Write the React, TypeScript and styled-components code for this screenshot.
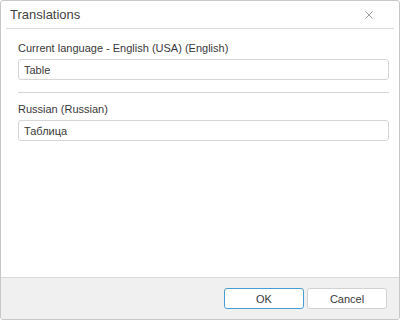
import React from 'react';
import styled, { createGlobalStyle } from 'styled-components';

const GlobalStyle = createGlobalStyle`
  html, body {
    margin: 0;
    padding: 0;
    background: #ffffff;
  }
  body {
    font-family: "Liberation Sans", Arial, sans-serif;
  }
`;

const Dialog = styled.div`
  width: 400px;
  height: 320px;
  box-sizing: border-box;
  border: 1px solid #c8c8c8;
  border-radius: 3px;
  background: #ffffff;
  display: flex;
  flex-direction: column;
  overflow: hidden;
`;

const Header = styled.div`
  margin: 0 5px;
  height: 27px;
  border-bottom: 1px solid #dcdcdc;
  display: flex;
  align-items: center;
  justify-content: space-between;
  padding: 0 0 0 4px;
`;

const Title = styled.span`
  font-size: 13px;
  color: #444444;
  line-height: 16px;
  padding-top: 1px;
`;

const CloseButton = styled.button`
  width: 16px;
  height: 16px;
  margin-right: 17px;
  padding: 0;
  border: none;
  background: transparent;
  display: flex;
  align-items: center;
  justify-content: center;
  cursor: pointer;
`;

const Body = styled.div`
  flex: 1;
  padding: 13px 10px 0 17px;
`;

const Label = styled.div`
  font-size: 11px;
  line-height: 13px;
  color: #3a3a3a;
`;

const Field = styled.input`
  display: block;
  width: 100%;
  height: 21px;
  box-sizing: border-box;
  margin: 4px 0 0;
  padding: 0 5px;
  border: 1px solid #d6d6d6;
  border-radius: 3px;
  font-family: "Liberation Sans", Arial, sans-serif;
  font-size: 11px;
  color: #3a3a3a;
  background: #ffffff;
  outline: none;
`;

const Divider = styled.div`
  height: 1px;
  background: #d4d4d4;
  margin: 12px 0 10px;
`;

const Footer = styled.div`
  height: 42px;
  box-sizing: border-box;
  flex-shrink: 0;
  border-top: 1px solid #dadada;
  background: #f0f0f0;
  display: flex;
  justify-content: flex-end;
  align-items: flex-start;
  gap: 3px;
  padding: 10px 12px 0 0;
`;

const Button = styled.button<{ $primary?: boolean }>`
  width: 80px;
  height: 21px;
  box-sizing: border-box;
  border: 1px solid ${({ $primary }) => ($primary ? '#4a9cd6' : '#d2d2d2')};
  border-radius: 3px;
  background: #ffffff;
  font-family: "Liberation Sans", Arial, sans-serif;
  font-size: 11px;
  color: #3a3a3a;
  padding: 0;
  cursor: pointer;
`;

const CloseIcon = () => (
  <svg width="8" height="8" viewBox="0 0 8 8">
    <path d="M0.5 0.5 L7.5 7.5 M7.5 0.5 L0.5 7.5" stroke="#a0a0a0" strokeWidth="1" />
  </svg>
);

export default function App() {
  return (
    <>
      <GlobalStyle />
      <Dialog>
        <Header>
          <Title>Translations</Title>
          <CloseButton aria-label="Close">
            <CloseIcon />
          </CloseButton>
        </Header>
        <Body>
          <Label>Current language - English (USA) (English)</Label>
          <Field defaultValue="Table" />
          <Divider />
          <Label>Russian (Russian)</Label>
          <Field defaultValue="Таблица" />
        </Body>
        <Footer>
          <Button $primary>OK</Button>
          <Button>Cancel</Button>
        </Footer>
      </Dialog>
    </>
  );
}
